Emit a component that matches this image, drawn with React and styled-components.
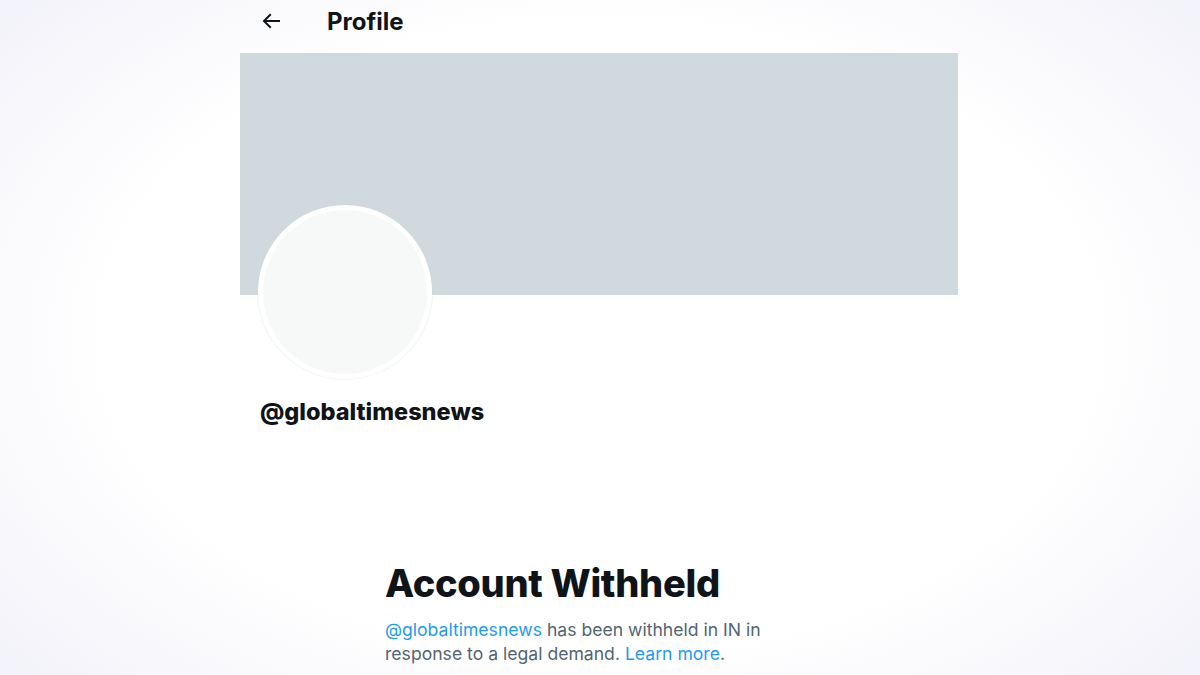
import React from "react";
import styled, { createGlobalStyle } from "styled-components";

const GlobalStyle = createGlobalStyle`
    html, body {
        margin: 0;
        padding: 0;
    }
    body {
        font-family: Inter, "Noto Sans", "Liberation Sans", sans-serif;
        color: #0f1419;
    }
`;

const Page = styled.div`
    width: 1200px;
    height: 675px;
    overflow: hidden;
    background: radial-gradient(ellipse 75% 85% at 50% 50%, #ffffff 55%, #eeeef8 100%);
`;

const Column = styled.main`
    width: 718px;
    margin-left: 240px;
    display: flex;
    flex-direction: column;
`;

const Header = styled.header`
    height: 42px;
    display: flex;
    align-items: center;
`;

const BackButton = styled.div`
    width: 68px;
    height: 42px;
    display: flex;
    align-items: center;
    padding-left: 19px;
    box-sizing: border-box;
    margin-right: 19px;
    svg {
        width: 24px;
        height: 24px;
        fill: #0f1419;
    }
`;

const Title = styled.h2`
    margin: 0;
    font-size: 24px;
    font-weight: 700;
`;

const Banner = styled.div`
    height: 242px;
    background-color: #cfd9de;
    margin-top: 11px;
`;

const AvatarRow = styled.div`
    padding-left: 18px;
    margin-top: -90px;
`;

const Avatar = styled.div`
    width: 164px;
    height: 164px;
    border-radius: 50%;
    border: 5px solid #ffffff;
    background-color: #f7f9f9;
    box-shadow: 0 0 0 1px rgba(207, 217, 222, 0.25);
`;

const Handle = styled.div`
    margin-top: 19px;
    padding-left: 20px;
    font-size: 23.5px;
    font-weight: 800;
    line-height: 28px;
`;

const Withheld = styled.section`
    margin-top: 135px;
    margin-left: 145px;
    width: 400px;
`;

const WithheldTitle = styled.h1`
    margin: 0;
    font-size: 38px;
    font-weight: 800;
    line-height: 44px;
    letter-spacing: -0.3px;
`;

const Message = styled.p`
    margin: 13px 0 0;
    font-size: 17.6px;
    line-height: 24px;
    color: #536471;
`;

const Link = styled.a`
    color: #1d9bf0;
    text-decoration: none;
`;

const App = () => {
    return (
        <>
            <GlobalStyle />
            <Page>
                <Column>
                    <Header>
                        <BackButton>
                            <svg viewBox="0 0 24 24">
                                <path d="M7.414 13l5.043 5.04-1.414 1.42L3.586 12l7.457-7.46 1.414 1.42L7.414 11H21v2H7.414z" />
                            </svg>
                        </BackButton>
                        <Title>Profile</Title>
                    </Header>
                    <Banner />
                    <AvatarRow>
                        <Avatar />
                    </AvatarRow>
                    <Handle>@globaltimesnews</Handle>
                    <Withheld>
                        <WithheldTitle>Account Withheld</WithheldTitle>
                        <Message>
                            <Link>@globaltimesnews</Link> has been withheld in IN in response to a legal demand.{" "}
                            <Link>Learn more</Link>.
                        </Message>
                    </Withheld>
                </Column>
            </Page>
        </>
    );
};

export default App;
